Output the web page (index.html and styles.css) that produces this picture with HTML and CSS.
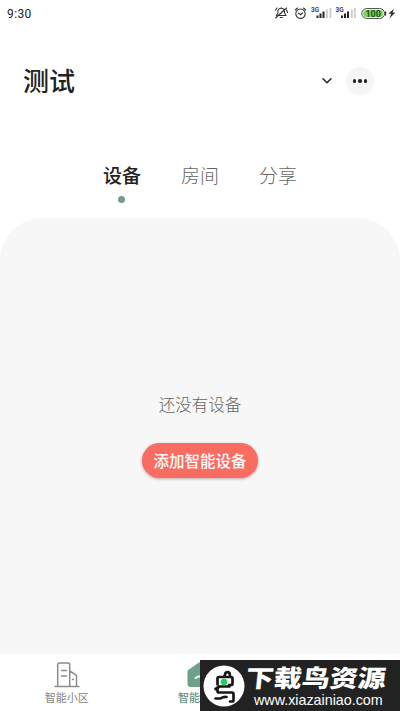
FILE: index.html
```html
<!DOCTYPE html>
<html lang="zh-CN">
<head>
<meta charset="utf-8">
<title>测试</title>
<link rel="stylesheet" href="styles.css">
</head>
<body>
<div class="screen">
  <header class="status">
    <span class="clock">9:30</span>
    <svg class="status-icons" width="125" height="20" viewBox="0 0 125 20" fill="none">
      <g stroke="#333" stroke-width="1.1" stroke-linecap="round" stroke-linejoin="round">
        <path d="M3.500 15.500h9.500l-1.500-2.500V11.500a3.300 3.300 0 0 0-6.600 0V13zM7.200 17.500h2.200M2.500 10l1.500-2M13.500 10l1 2.500M2.500 18L13.500 8M8.200 8V7.500"/>
        <circle cx="27.500" cy="13.700" r="4.700"/>
        <path d="M25.300 13l2.200 1.700 2.200-1.700M22.300 10l2.200-2M32.700 10l-2.200-2"/>
      </g>
      <g fill="#222">
        <path d="M43.500 15.500h2v2.500h-2zM46.500 13.500h2V18h-2zM49.500 11.500h2V18h-2z"/>
        <path d="M68 15.500h2v2.500h-2zM71 13.500h2V18h-2zM74 11.500h2V18h-2z"/>
      </g>
      <path fill="#ccc" d="M53 9.500h1.800V18H53zM56.500 8h1.800v10h-1.800zM78 9.500h1.800V18H78zM81 8h1.800v10H81z"/>
      <rect x="88.800" y="8.600" width="22.800" height="9.800" rx="4.900" fill="#fff" stroke="#444" stroke-width="1"/>
      <rect x="90.200" y="10" width="20" height="7" rx="3.500" fill="#80d45c"/>
      <path fill="#333" d="M112 11.500h1.200v4H112zM121 8.500l-5.500 5.300h2.700l-1.800 4.700 6-6h-2.900z"/>
      <g class="status-text"><text x="38" y="12">3G</text><text x="62.500" y="12">3G</text></g>
      <text class="battery" x="100.200" y="17" text-anchor="middle">100</text>
    </svg>
  </header>

  <div class="titlebar">
    <h1>测试</h1>
    <svg class="chevron" width="10" height="6" viewBox="0 0 10 6" fill="none" stroke="#222" stroke-width="1.500" stroke-linecap="round" stroke-linejoin="round"><path d="M1 .8l4 4 4-4"/></svg>
    <div class="more"><i></i><i></i><i></i></div>
  </div>

  <nav class="tabs">
    <div class="tab active">设备</div>
    <div class="tab">房间</div>
    <div class="tab">分享</div>
  </nav>

  <main class="panel">
    <p>还没有设备</p>
    <div class="add">添加智能设备</div>
  </main>

  <footer class="bottom">
    <div class="item">
      <svg width="26" height="26" viewBox="0 0 26 26" fill="none" stroke="#8b8b8b" stroke-width="1.500" stroke-linejoin="round" stroke-linecap="round"><path d="M1 24.500h24M3.700 24.500V2.500q0-1.500 1.500-1.500h9q1.500 0 1.500 1.500v22M15.700 9l6 3.700q.8.500.8 1.500v10.300M7.500 8.500h5M7.500 14h5M18.500 17.500h1"/></svg>
      <span>智能小区</span>
    </div>
    <div class="item current">
      <svg width="26" height="26" viewBox="0 0 26 26"><path fill="#6fa089" d="M12 .4q1-.8 2 0l10.500 7.300q1 .7 1 1.800V22q0 3-3 3H3.500q-3 0-3-3V9.500q0-1.100 1-1.800z"/><path d="M8.500 16q4.500-3.500 9 0" fill="none" stroke="#fff" stroke-width="1.800" stroke-linecap="round"/></svg>
      <span>智能家居</span>
    </div>
    <div class="item"></div>
  </footer>

  <div class="banner">
    <svg class="bird" width="42" height="42" viewBox="0 0 42 42" fill="none">
      <circle cx="21" cy="21" r="20.500" fill="#fff"/>
      <g stroke="#171717" stroke-width="2.700" stroke-linejoin="round" stroke-linecap="round">
        <path d="M14.500 19.500v-6q0-1.500 1.500-1.500h12q1.500 0 1.500 1.500v5q0 1.500-1.500 1.500h-2M21.500 11l1-3q2-2 4 0l.5 2.500M12.500 24l4-2.500h10M14.500 23.500v2.500q0 1.500 1.500 1.500h13q1.500 0 1.500 1.500v6q0 1.500-1.500 1.500h-2M12.500 33.500h5q3-2 6-1.500"/>
      </g>
      <circle cx="21" cy="17" r="3.300" fill="#22d45b"/>
    </svg>
    <div class="brand">
      <strong>下载鸟资源</strong>
      <span>www.xiazainiao.com</span>
    </div>
  </div>
</div>
</body>
</html>
```
FILE: styles.css
```css
* { box-sizing: border-box; }
body {
  margin: 0;
  background: #fff;
  font-family: "Noto Sans CJK SC", sans-serif;
}
.screen {
  position: relative;
  display: flex;
  flex-direction: column;
  width: 400px;
  height: 711px;
  overflow: hidden;
}
.status {
  display: flex;
  justify-content: space-between;
  height: 28px;
  padding: 0 2px 0 7px;
}
.clock {
  font: 12px/28px Roboto, sans-serif;
  letter-spacing: .4px;
  color: #222;
}
.status-text { font: 500 6.500px Roboto, sans-serif; fill: #222; }
.battery { font: 700 9px Roboto, sans-serif; fill: #234d18; }
.titlebar {
  display: flex;
  align-items: center;
  height: 48px;
  margin-top: 29px;
  padding: 0 26px 0 23px;
  margin-bottom: 45px;
}
h1 {
  flex: 1;
  margin: 0;
  padding-bottom: 3px;
  font-size: 26px;
  line-height: 46px;
  font-weight: 500;
  color: #222;
}
.more {
  display: flex;
  align-items: center;
  justify-content: center;
  gap: 2px;
  width: 28px;
  height: 28px;
  margin-left: 14px;
  border-radius: 50%;
  background: #f5f5f5;
}
.more i {
  width: 3.500px;
  height: 3.500px;
  border-radius: 50%;
  background: #222;
}
.tabs {
  display: flex;
  justify-content: center;
  gap: 40px;
  height: 68px;
  padding: 11px 0 0 0;
}
.tab {
  display: flex;
  flex-direction: column;
  align-items: center;
  font-size: 19px;
  line-height: 28px;
  font-weight: 300;
  color: #666;
}
.tab.active { font-weight: 500; color: #222; }
.tab.active::after {
  content: "";
  width: 7px;
  height: 7px;
  margin-top: 7px;
  border-radius: 50%;
  background: #75998b;
}
.panel {
  display: flex;
  flex-direction: column;
  align-items: center;
  height: 436px;
  padding-top: 174px;
  border-radius: 42px 42px 0 0;
  background: #f7f7f7;
}
.panel p {
  margin: 0 0 26px;
  font-size: 16.500px;
  line-height: 25px;
  font-weight: 300;
  color: #666;
}
.add {
  width: 116px;
  height: 35px;
  border-radius: 18px;
  background: #f96c61;
  box-shadow: 0 1px 3px rgba(110, 40, 35, .4);
  font-size: 15.500px;
  line-height: 35px;
  font-weight: 500;
  text-align: center;
  white-space: nowrap;
  color: #fff;
}
.bottom { display: flex; flex: 1; }
.item {
  display: flex;
  flex: 1;
  flex-direction: column;
  align-items: center;
  padding-top: 8px;
  font-size: 11px;
  line-height: 18px;
  color: #858585;
}
.current { font-weight: 500; color: #6b9282; }
.banner {
  position: absolute;
  right: 0;
  bottom: 0;
  display: flex;
  gap: 1px;
  width: 200px;
  height: 51px;
  padding: 5px 0 0 3px;
  background: #222;
  color: #fff;
}
.brand {
  display: flex;
  flex-direction: column;
  width: 148px;
}
.brand strong {
  height: 26px;
  font-size: 28px;
  line-height: 24px;
  font-weight: 900;
  white-space: nowrap;
  transform: skewX(-6deg) scaleY(.86);
}
.brand span {
  margin-left: 8px;
  font: 14.300px/18px "Liberation Sans", sans-serif;
}
```
